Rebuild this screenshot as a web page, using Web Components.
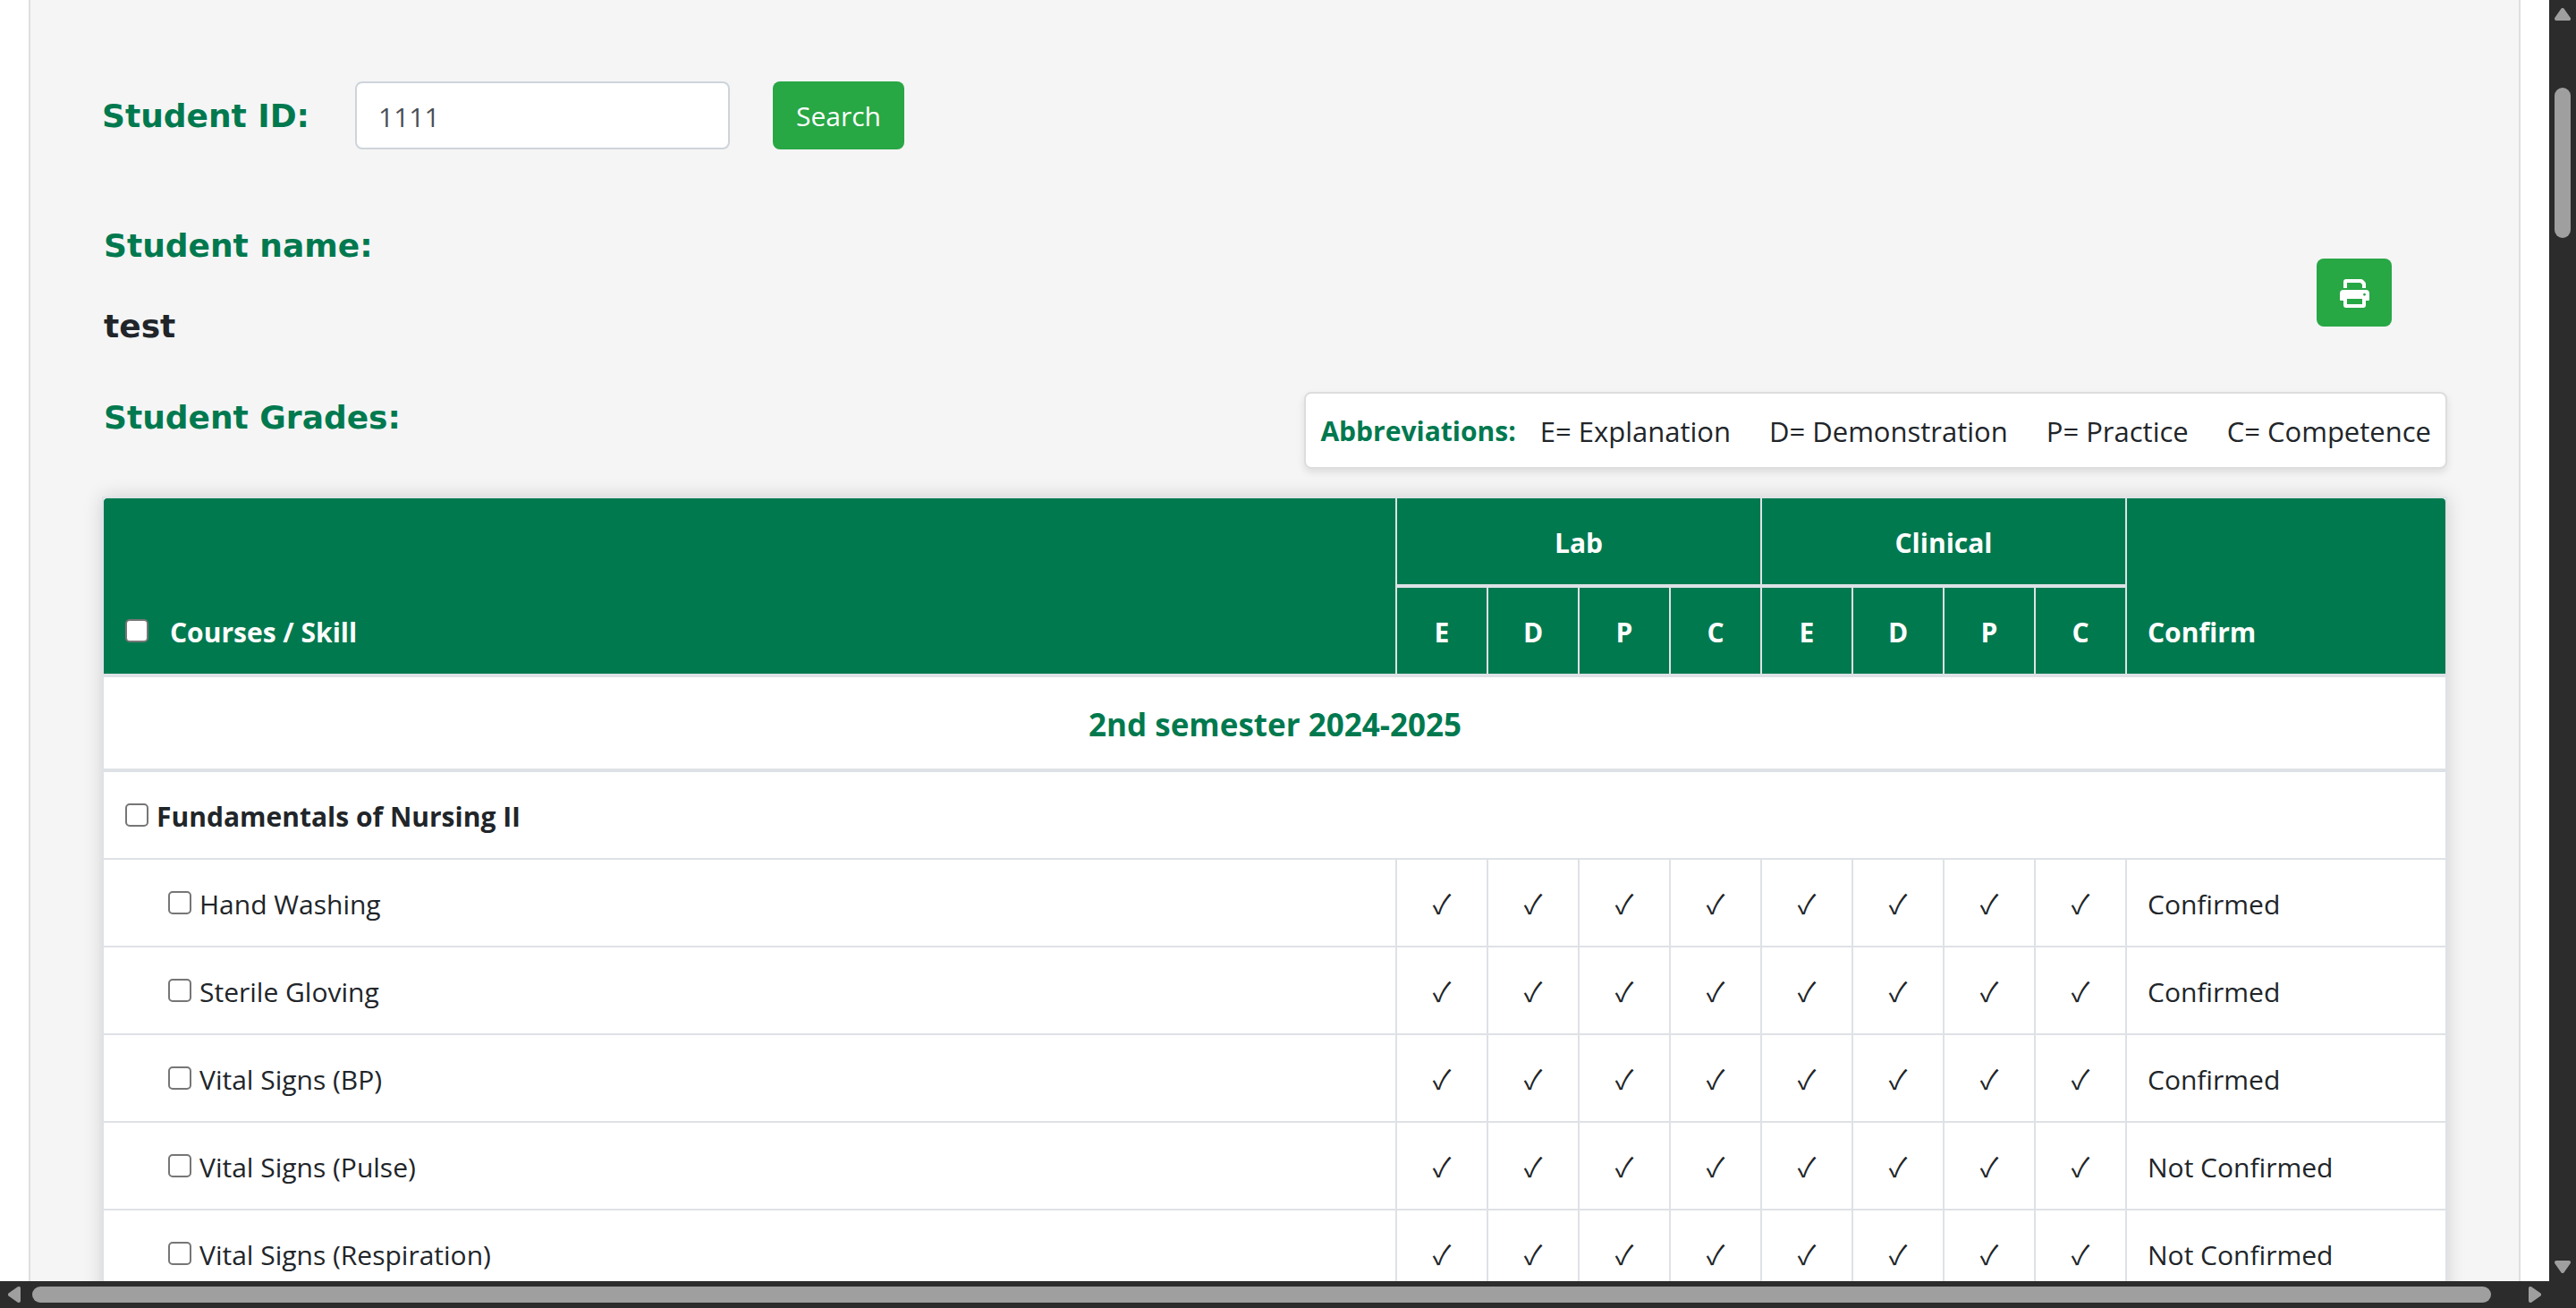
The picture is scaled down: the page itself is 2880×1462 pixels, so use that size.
<!DOCTYPE html>
<html lang="en">
<head>
<meta charset="utf-8">
<meta name="viewport" content="width=device-width, initial-scale=1">
<title>Student Grades</title>
<style>
  html, body { margin: 0; height: 100%; }
  body {
    --brand: #00794f;
    --success: #28a745;
    --line: #dee2e6;
    --heading-font: "DejaVu Sans", Verdana, sans-serif;
    overflow: hidden;
    background: #fff;
    color: #212529;
    font: 30px/48px "Open Sans", "Noto Sans", sans-serif;
  }
</style>
</head>
<body>
<page-frame>
  <grades-page>
    <student-search slot="search" value="1111"></student-search>
    <student-name slot="name">test</student-name>
    <print-button slot="action"></print-button>
    <abbreviation-key slot="key"></abbreviation-key>
    <grades-table slot="table"></grades-table>
  </grades-page>
</page-frame>

<script>
const define = (name, html, setup) => {
  const template = document.createElement('template');
  template.innerHTML = '<style>*{box-sizing:border-box}</style>' + html;
  customElements.define(name, class extends HTMLElement {
    constructor() {
      super();
      this.attachShadow({ mode: 'open' }).append(template.content.cloneNode(true));
    }
    connectedCallback() { if (setup) setup(this, this.shadowRoot); }
  });
};

/* Scroll bar with two arrows and a thumb; axis="x" or axis="y". */
define('scroll-rail', `
<style>
  :host { display: flex; background: #2c2c2c; }
  :host([axis="y"]) { flex-direction: column; }
  .end { flex: none; display: flex; width: 36px; height: 30px; padding: 0 9px; align-items: center; }
  :host([axis="y"]) .end { width: 30px; height: 36px; padding: 9px 0; align-items: flex-start; justify-content: center; }
  .end.last { justify-content: flex-end; }
  :host([axis="y"]) .end.last { align-items: flex-end; justify-content: center; }
  svg { display: block; fill: #9f9f9f; stroke: #9f9f9f; stroke-width: 4; stroke-linejoin: round; }
  .track { flex: 1; display: grid; padding: 6px 0; grid-template-columns: 2749fr 29fr; }
  :host([axis="y"]) .track { padding: 0 6px; grid-template-columns: 1fr; grid-template-rows: 62fr 168fr 1130fr; }
  :host([axis="y"]) .thumb { grid-row: 2; }
  .thumb { border-radius: 9px; background: #9f9f9f; }
</style>
<div class="end first"></div><div class="track"><div class="thumb"></div></div><div class="end last"></div>`,
(host, root) => {
  const icon = (w, h, d) => `<svg width="${w}" height="${h}" viewBox="0 0 ${w} ${h}" aria-hidden="true"><path d="${d}"/></svg>`;
  const y = host.getAttribute('axis') === 'y';
  root.querySelector('.first').innerHTML = y ? icon(18, 14, 'M9 2 16 12H2Z') : icon(14, 18, 'M2 9 12 2V16Z');
  root.querySelector('.last').innerHTML = y ? icon(18, 14, 'M9 12 16 2H2Z') : icon(14, 18, 'M12 9 2 2V16Z');
});

define('page-frame', `
<style>
  :host { display: grid; height: 100vh; grid-template: minmax(0, 1fr) 30px / minmax(0, 1fr) 30px; }
  .view { overflow: hidden; display: flex; }
  .corner { background: #2c2c2c; }
</style>
<div class="view"><slot></slot></div>
<scroll-rail axis="y"></scroll-rail>
<scroll-rail axis="x"></scroll-rail>
<div class="corner"></div>`);

define('grades-page', `
<style>
  :host { display: block; box-sizing: border-box; flex: 1; min-width: 0; height: max-content; margin: 0 32px; padding: 91px 80px 80px; border: solid #dfdfdf; border-width: 0 2px; background: #f5f5f5; }
  .info { display: flex; justify-content: space-between; align-items: flex-start; margin-top: 87px; padding-left: 2px; }
  .action { padding: 35px 62px 0 0; }
  .grades { display: flex; justify-content: space-between; align-items: flex-start; margin: 52px 0 31px; padding-left: 2px; }
  h2 { margin: 0; padding-top: 8px; font: bold 36px/42px var(--heading-font); color: var(--brand); }
</style>
<slot name="search"></slot>
<div class="info"><slot name="name"></slot><div class="action"><slot name="action"></slot></div></div>
<div class="grades"><h2>Student Grades:</h2><slot name="key"></slot></div>
<slot name="table"></slot>`);

define('student-search', `
<style>
  :host { display: block; }
  form { display: flex; align-items: center; margin: 0; }
  label { width: 283px; padding-top: 2px; font: bold 36px/42px var(--heading-font); color: var(--brand); }
  input { width: 419px; height: 76px; margin: 0 48px 0 0; padding: 2px 24px 0; border: 2px solid #ced4da; border-radius: 8px; background: #fff; color: #495057; font: inherit; }
  button { height: 76px; padding: 2px 26px 0; border: 0; border-radius: 8px; background: var(--success); color: #fff; font: inherit; }
</style>
<form><label for="sid">Student ID:</label><input id="sid" type="text"><button type="button">Search</button></form>`,
(host, root) => { root.querySelector('input').value = host.getAttribute('value') || ''; });

define('student-name', `
<style>
  :host { display: grid; gap: 48px; font: bold 36px/42px var(--heading-font); }
  h2, p { margin: 0; font: inherit; }
  h2 { color: var(--brand); }
</style>
<h2>Student name:</h2><p><slot></slot></p>`);

define('print-button', `
<style>
  :host { display: block; }
  button { display: grid; place-content: center; width: 84px; height: 76px; padding: 2px 0 0; border: 0; border-radius: 8px; background: var(--success); }
</style>
<button type="button" aria-label="Print">
  <svg width="33" height="32" viewBox="0 0 33 32" fill="#fff" aria-hidden="true">
    <path d="M4 10V3Q4 0 7 0H23.5Q25 0 26 1L28 3Q29 4 29 5.500V10H25V6L23 4H8V10Z"/>
    <path fill-rule="evenodd" d="M4 12H29Q33 12 33 16V23Q33 24 32 24H29V29Q29 32 26 32H7Q4 32 4 29V24H1Q0 24 0 23V16Q0 12 4 12ZM8 22V28H25V22ZM27.500 15.800A1.400 1.400 0 1 0 27.510 15.800Z"/>
  </svg>
</button>`);

define('abbreviation-key', `
<style>
  :host { display: flex; box-sizing: border-box; gap: 43px; padding: 18px 16px 16px; border: 2px solid #ddd; border-radius: 8px; background: #fff; box-shadow: 0 4px 8px rgba(0,0,0,.1); white-space: nowrap; }
  strong { margin-right: -16px; color: var(--brand); }
  span { font-size: 31px; }
</style>
<strong>Abbreviations:</strong><span>E= Explanation</span><span>D= Demonstration</span><span>P= Practice</span><span>C= Competence</span>`);

define('grades-table', `
<style>
  :host { display: block; }
  table { width: 100%; table-layout: fixed; border-spacing: 0; border: 2px solid var(--line); background: #fff; box-shadow: 0 0 20px rgba(0,0,0,.15); }
  col.mark { width: 102px; }
  col.confirm { width: 358px; }
  th, td { padding: 26px 23px 22px; border: 0 solid var(--line); text-align: left; vertical-align: bottom; }
  th:first-child, td:first-child { padding-left: 24px; }
  thead { color: #fff; }
  thead th { background: var(--brand); border-bottom-width: 4px; }
  thead tr:first-child th:first-child { border-top-left-radius: 4px; }
  thead tr:first-child th:last-child { border-top-right-radius: 4px; }
  th.mark, td.mark, th.mark:first-child { padding-left: 0; padding-right: 0; border-left-width: 2px; text-align: center; }
  .state { border-left-width: 2px; }
  .term th { border-bottom-width: 4px; text-align: center; color: var(--brand); font-size: 35px; line-height: 54px; }
  .course th, .skill td { border-bottom-width: 2px; }
  label { display: flex; align-items: center; gap: 9px; }
  thead label { gap: 24px; }
  .skill label { padding-left: 48px; }
  input { appearance: none; flex: none; width: 26px; height: 26px; margin: 0 0 4px; border: 2px solid #767676; border-radius: 5px; background: #fff; }
  td.mark { padding-top: 24px; padding-bottom: 24px; font-family: "Noto Sans CJK JP", "DejaVu Sans", sans-serif; }
</style>
<table>
  <colgroup><col><col class="mark" span="8"><col class="confirm"></colgroup>
  <thead>
    <tr><th rowspan="2"><label><input type="checkbox">Courses / Skill</label></th><th class="mark" colspan="4">Lab</th><th class="mark" colspan="4">Clinical</th><th class="state" rowspan="2">Confirm</th></tr>
    <tr class="letters"></tr>
  </thead>
  <tbody>
    <tr class="term"><th colspan="10">2nd semester 2024-2025</th></tr>
    <tr class="course"><th colspan="10"><label><input type="checkbox">Fundamentals of Nursing II</label></th></tr>
  </tbody>
</table>`,
(host, root) => {
  root.querySelector('.letters').innerHTML = [...'EDPCEDPC'].map(c => `<th class="mark">${c}</th>`).join('');
  const skills = [
    ['Hand Washing', 'Confirmed'],
    ['Sterile Gloving', 'Confirmed'],
    ['Vital Signs (BP)', 'Confirmed'],
    ['Vital Signs (Pulse)', 'Not Confirmed'],
    ['Vital Signs (Respiration)', 'Not Confirmed'],
  ];
  root.querySelector('tbody').insertAdjacentHTML('beforeend', skills.map(([skill, state]) =>
    `<tr class="skill"><td><label><input type="checkbox">${skill}</label></td>${'<td class="mark">✓</td>'.repeat(8)}<td class="state">${state}</td></tr>`).join(''));
});
</script>
</body>
</html>
